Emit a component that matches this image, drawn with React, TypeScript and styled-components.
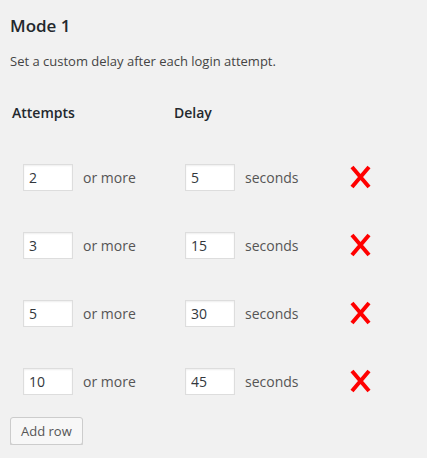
import React from "react";
import styled, { createGlobalStyle } from "styled-components";

const GlobalStyle = createGlobalStyle`
  html, body {
    margin: 0;
    padding: 0;
    background: #f1f1f1;
  }
  body {
    font-family: "Open Sans", "Liberation Sans", sans-serif;
    color: #444;
    font-size: 13px;
  }
`;

const Wrap = styled.div`
  padding: 10px 10px 0 10px;
`;

const Title = styled.h2`
  margin: 4px 0 0 0;
  font-size: 17px;
  line-height: 24px;
  font-weight: 600;
  color: #23282d;
`;

const Description = styled.p`
  margin: 14px 0 0 0;
  font-size: 13px;
  line-height: 18px;
  color: #444;
`;

const Table = styled.div`
  margin-top: 33px;
  display: grid;
  grid-template-columns: 162px 165px 60px;
`;

const HeadCell = styled.div`
  padding-left: 2px;
  font-size: 14px;
  font-weight: 600;
  color: #23282d;
  line-height: 20px;
  height: 40px;
`;

const Cell = styled.div`
  height: 68px;
  display: flex;
  align-items: center;
  padding-left: 13px;
  gap: 10px;
  font-size: 14px;
  color: #555;
`;

const NumberInput = styled.input`
  box-sizing: border-box;
  width: 50px;
  height: 27px;
  margin: 0;
  padding: 2px 5px;
  border: 1px solid #ddd;
  box-shadow: inset 0 1px 2px rgba(0, 0, 0, 0.07);
  background: #fff;
  font-family: "Open Sans", "Liberation Sans", sans-serif;
  font-size: 14px;
  color: #32373c;
  outline: none;
`;

const RemoveButton = styled.span`
  display: inline-flex;
  cursor: pointer;
  svg {
    width: 22px;
    height: 24px;
  }
`;

const AddButton = styled.button`
  margin-top: 2px;
  height: 28px;
  padding: 0 10px 1px;
  border: 1px solid #ccc;
  border-radius: 3px;
  background: #f7f7f7;
  box-shadow: 0 1px 0 #ccc;
  color: #555;
  font-family: "Open Sans", "Liberation Sans", sans-serif;
  font-size: 13px;
  line-height: 26px;
  cursor: pointer;
`;

const rows = [
  { attempts: 2, delay: 5 },
  { attempts: 3, delay: 15 },
  { attempts: 5, delay: 30 },
  { attempts: 10, delay: 45 },
];

function CrossIcon() {
  return (
    <svg viewBox="0 0 22 24">
      <path
        d="M2 2 L19 22 M19 2 L2 22"
        stroke="#ff0000"
        strokeWidth="4"
        strokeLinecap="butt"
        fill="none"
      />
    </svg>
  );
}

export default function App() {
  return (
    <Wrap>
      <GlobalStyle />
      <Title>Mode 1</Title>
      <Description>Set a custom delay after each login attempt.</Description>
      <Table>
        <HeadCell>Attempts</HeadCell>
        <HeadCell>Delay</HeadCell>
        <HeadCell />
        {rows.map((r) => (
          <React.Fragment key={r.attempts}>
            <Cell>
              <NumberInput defaultValue={r.attempts} />
              or more
            </Cell>
            <Cell>
              <NumberInput defaultValue={r.delay} />
              seconds
            </Cell>
            <Cell>
              <RemoveButton>
                <CrossIcon />
              </RemoveButton>
            </Cell>
          </React.Fragment>
        ))}
      </Table>
      <AddButton>Add row</AddButton>
    </Wrap>
  );
}
